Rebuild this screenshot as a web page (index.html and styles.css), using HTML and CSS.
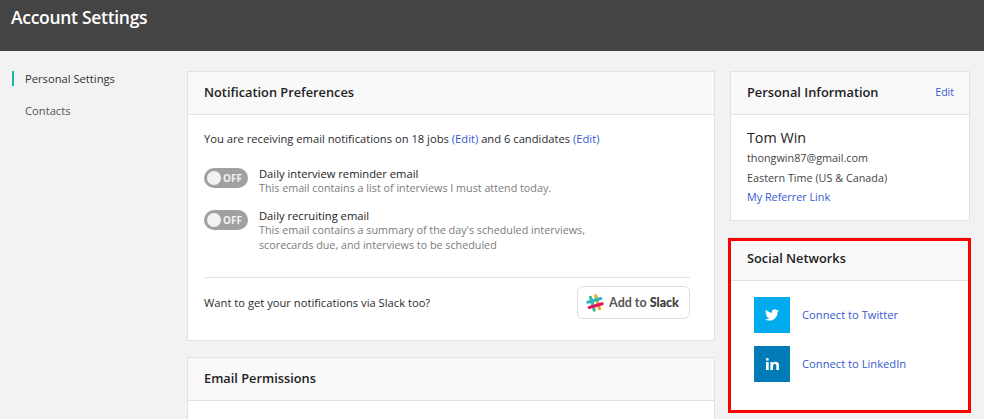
FILE: index.html
```html
<!DOCTYPE html>
<html lang="en">
<head>
<meta charset="utf-8">
<title>Account Settings</title>
<link rel="stylesheet" href="styles.css">
</head>
<body>
<header class="topbar"><h1 class="page-title">Account Settings</h1></header>
<div class="layout">
  <nav class="sidenav">
    <a class="nav-item active">Personal Settings</a>
    <a class="nav-item">Contacts</a>
  </nav>
  <main class="main-col">
    <section class="card">
      <div class="card-head"><h2 class="card-title">Notification Preferences</h2></div>
      <div class="notif-body">
        <p class="summary">You are receiving email notifications on 18 jobs <a class="link">(Edit)</a> and 6 candidates <a class="link">(Edit)</a></p>
        <div class="pref">
          <span class="toggle"><span class="knob"></span><span class="toggle-text">OFF</span></span>
          <div class="pref-text">
            <div class="pref-title">Daily interview reminder email</div>
            <div class="pref-desc">This email contains a list of interviews I must attend today.</div>
          </div>
        </div>
        <div class="pref">
          <span class="toggle"><span class="knob"></span><span class="toggle-text">OFF</span></span>
          <div class="pref-text">
            <div class="pref-title">Daily recruiting email</div>
            <div class="pref-desc">This email contains a summary of the day's scheduled interviews,<br>scorecards due, and interviews to be scheduled</div>
          </div>
        </div>
        <div class="slack-row">
          <span class="slack-q">Want to get your notifications via Slack too?</span>
          <a class="slack-btn">
            <svg class="slack-icon" width="18" height="18" viewBox="0 0 20 20" aria-hidden="true">
              <g stroke-width="3.4" stroke-linecap="round" fill="none" transform="rotate(-16 10 10)">
                <path d="M13 2.500V17.500" stroke="#e9a820"/>
                <path d="M7 2.500V17.500" stroke="#3eb991"/>
                <path d="M2.500 7H17.500" stroke="#2fb5c8"/>
                <path d="M2.500 13H17.500" stroke="#e01563"/>
              </g>
            </svg>
            <span class="slack-label">Add to <b>Slack</b></span>
          </a>
        </div>
      </div>
    </section>
    <section class="card">
      <div class="card-head"><h2 class="card-title">Email Permissions</h2></div>
      <div class="perm-body"></div>
    </section>
  </main>
  <aside class="side-col">
    <section class="card">
      <div class="card-head split"><h2 class="card-title">Personal Information</h2><a class="link edit">Edit</a></div>
      <div class="info-body">
        <div class="name">Tom Win</div>
        <div class="info-line">thongwin87@gmail.com</div>
        <div class="info-line">Eastern Time (US &amp; Canada)</div>
        <a class="link info-line">My Referrer Link</a>
      </div>
    </section>
    <section class="card social">
      <div class="card-head"><h2 class="card-title">Social Networks</h2></div>
      <div class="social-body">
        <a class="social-row">
          <span class="social-icon twitter">
            <svg width="14" height="12" viewBox="0 0 24 20" aria-hidden="true"><path fill="#fff" d="M24 2.400c-.9.4-1.800.7-2.800.8 1-.6 1.800-1.600 2.200-2.700-1 .6-2 1-3.100 1.200C19.300.7 18 0 16.600 0c-2.700 0-4.900 2.200-4.900 4.900 0 .4 0 .8.1 1.100C7.700 5.800 4.100 3.900 1.700.9c-.4.7-.7 1.600-.7 2.500 0 1.700.9 3.200 2.200 4.100-.8 0-1.600-.2-2.200-.6v.1c0 2.400 1.700 4.400 3.900 4.800-.4.1-.8.2-1.300.2-.3 0-.6 0-.9-.1.6 2 2.400 3.400 4.600 3.400-1.700 1.300-3.800 2.100-6.100 2.100-.4 0-.8 0-1.200-.1C2.200 18.800 4.800 19.600 7.500 19.600c9.100 0 14-7.500 14-14v-.6c1-.7 1.800-1.600 2.500-2.600z"/></svg>
          </span>
          <span class="link">Connect to Twitter</span>
        </a>
        <a class="social-row">
          <span class="social-icon linkedin">
            <svg width="13" height="12" viewBox="0 0 14 13" aria-hidden="true"><path fill="#fff" d="M0 4.300h2.900V13H0zM1.450 0a1.500 1.500 0 1 1 0 3 1.500 1.500 0 0 1 0-3zM4.700 4.300h2.750v1.200c.45-.8 1.450-1.400 2.800-1.400C13.100 4.100 14 5.800 14 8.300V13h-2.900V8.800c0-1.200-.3-2.200-1.500-2.200-1.250 0-1.950.9-1.950 2.200V13H4.700z"/></svg>
          </span>
          <span class="link">Connect to LinkedIn</span>
        </a>
      </div>
      <div class="highlight" aria-hidden="true"></div>
    </section>
  </aside>
</div>
</body>
</html>
```
FILE: styles.css
```css
* { box-sizing: border-box; }
html, body { margin: 0; padding: 0; }
body {
  width: 984px;
  height: 419px;
  overflow: hidden;
  background: #f2f2f2;
  font-family: "Open Sans", sans-serif;
  font-size: 11.200px;
  color: #2b2b2b;
}
.topbar { height: 51px; background: #444444; padding: 5px 0 0 11px; }
.page-title { margin: 0; font-size: 17.500px; line-height: 25px; font-weight: 600; color: #fff; letter-spacing: -0.3px; }
.layout { display: flex; padding: 20px 14px 0 12px; align-items: flex-start; }
.sidenav { width: 175px; flex: none; display: flex; flex-direction: column; gap: 17px; }
.nav-item { display: block; padding-left: 13px; height: 15px; line-height: 15px; font-size: 11.200px; color: #555; }
.nav-item.active { border-left: 2px solid #1ab5a3; padding-left: 11px; color: #333; }
.main-col { width: 528px; flex: none; display: flex; flex-direction: column; gap: 16px; }
.side-col { width: 240px; flex: none; margin-left: 15px; display: flex; flex-direction: column; gap: 16px; }
.card { position: relative; background: #fff; border: 1px solid #e2e2e2; }
.card-head { height: 43px; padding: 0 16px 2px; display: flex; align-items: center; background: #f9f9f9; border-bottom: 1px solid #e2e2e2; }
.card-head.split { justify-content: space-between; }
.card-title { margin: 0; font-size: 12.800px; font-weight: 600; color: #222; }
.link { color: #3559d0; }
.edit { font-size: 10.500px; margin-right: -1px; }
.notif-body { padding: 16px 24px 21px 16px; }
.summary { margin: 0 0 19px; font-size: 11.200px; line-height: 16px; color: #2b2b2b; }
.pref { display: flex; gap: 11px; margin-bottom: 12px; }
.toggle { flex: none; width: 44px; height: 20px; margin-top: 2px; border-radius: 10px; background: #a0a0a0; display: flex; align-items: center; padding: 0 3px; gap: 2px; }
.knob { width: 14px; height: 14px; border-radius: 50%; background: #f2f2f2; flex: none; }
.toggle-text { font-size: 10px; font-weight: 700; color: #f2f2f2; }
.pref-title { font-size: 11.200px; line-height: 15px; color: #222; }
.pref-desc { font-size: 10.750px; line-height: 15px; color: #7c7c7c; }
.slack-row { margin-top: 24px; padding-top: 8px; border-top: 1px solid #e4e4e4; display: flex; justify-content: space-between; align-items: center; }
.slack-q { font-size: 11.200px; color: #2b2b2b; }
.slack-btn { width: 113px; height: 33px; padding-right: 2px; border: 1px solid #dedede; border-radius: 6px; display: flex; align-items: center; justify-content: center; gap: 5px; background: #fff; }
.slack-label { font-family: Lato, sans-serif; font-size: 12.500px; font-weight: 700; color: #555; }
.slack-label b { color: #3d3d3d; font-weight: 900; }
.perm-body { height: 60px; }
.info-body { padding: 13px 16px; }
.name { font-size: 14.300px; line-height: 20px; color: #222; }
.info-line { display: block; font-size: 10.800px; line-height: 19.500px; color: #444; }
.info-line.link { color: #3559d0; }
.social-body { padding: 16px 23px 29px; display: flex; flex-direction: column; gap: 13px; }
.social-row { display: flex; align-items: center; gap: 12px; font-size: 11.200px; }
.social-icon { width: 36px; height: 36px; display: flex; align-items: center; justify-content: center; flex: none; }
.twitter { background: #00aced; }
.linkedin { background: #007bb6; }
.highlight { position: absolute; left: -3px; top: 0; width: 243px; height: 175px; border: 3px solid #f00; pointer-events: none; }
```
